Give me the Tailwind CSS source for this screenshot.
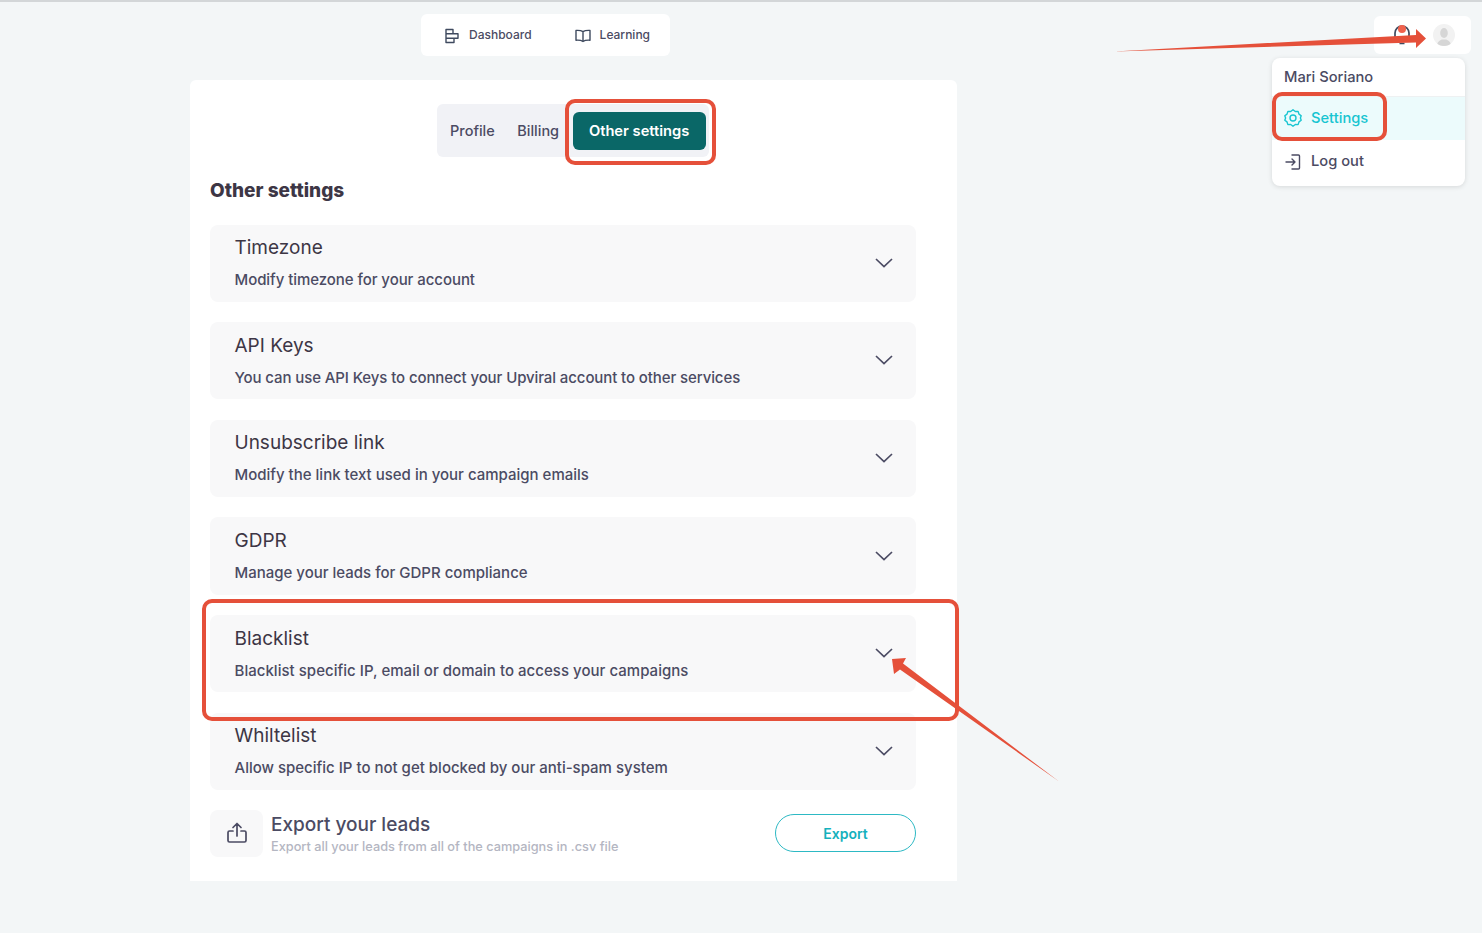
<!DOCTYPE html>
<html lang="en">
<head>
  <meta charset="UTF-8">
  <meta name="viewport" content="width=device-width, initial-scale=1.0">
  <title>Other settings</title>
  <script src="https://cdn.jsdelivr.net/npm/@tailwindcss/browser@4"></script>
</head>
<body class="relative h-[933px] overflow-hidden bg-[#f3f6f7] border-t-2 border-[#d3d6d8] font-['Inter',sans-serif] text-[#4b4b63]">
  <!-- Top nav -->
  <div class="flex justify-start pl-[421px] pt-3">
    <nav class="flex h-[42px] w-[249px] items-center rounded-md bg-white pl-[23px] text-[12px] font-medium">
      <a class="flex items-center gap-[9px]">
        <svg class="mt-px h-[16px] w-[16px]" viewBox="0 0 16 16" fill="none" stroke="#3f4a5f" stroke-width="1.4" stroke-linejoin="round"><path d="M2 1.5h7v4.3H2zM2 5.8h12v4.4H2zM2 10.2h8v4.3H2z"/></svg>
        <span>Dashboard</span>
      </a>
      <a class="ml-[43px] flex items-center gap-[9px]">
        <svg class="mt-px h-[16px] w-[16px]" viewBox="0 0 16 16" fill="none" stroke="#3f4a5f" stroke-width="1.4" stroke-linejoin="round"><path d="M8 3.6C6.5 2.6 4 2.2 1 2.4v9.8c3-.2 5.500.2 7 1.300 1.500-1.100 4-1.500 7-1.300V2.400C12 2.200 9.500 2.600 8 3.600zM8 3.600v9.900"/></svg>
        <span>Learning</span>
      </a>
    </nav>
  </div>

  <!-- Settings card -->
  <main class="ml-[190px] mt-6 h-[801px] w-[767px] rounded-t-md bg-white pl-5 pr-[41px] pt-6">
    <div class="ml-[227px] flex h-[53px] w-[272px] items-center rounded-md bg-[#f1f2f6] pl-[13px] pt-px text-[14.500px] font-medium">
      <span>Profile</span>
      <span class="ml-[22.500px]">Billing</span>
      <span class="ml-[13.500px] flex h-[38px] w-[133px] items-center justify-center rounded-md bg-[#0a6767] text-[14.700px] font-semibold text-white">Other settings</span>
    </div>
    <h2 class="mt-[22px] text-[19px] font-extrabold leading-[24px] text-[#3d3645]">Other settings</h2>

    <div class="mt-[21.500px] flex flex-col gap-[20.350px]">
      <section class="flex h-[77.300px] items-center justify-between rounded-lg bg-[#f8f8f9] pl-[24.500px] pr-[23px] pt-px">
        <div><h3 class="text-[19px] leading-[24px] text-[#3d3645]">Timezone</h3><p class="mt-[9px] text-[15px] font-medium leading-[22px] tracking-[-0.06px]">Modify timezone for your account</p></div>
        <svg class="h-[12px] w-[18px]" viewBox="0 0 18 12" fill="none" stroke="#4b4b63" stroke-width="1.700"><path d="M1 1l8 7.500L17 1"/></svg>
      </section>
      <section class="flex h-[77.300px] items-center justify-between rounded-lg bg-[#f8f8f9] pl-[24.500px] pr-[23px] pt-px">
        <div><h3 class="text-[19px] leading-[24px] text-[#3d3645]">API Keys</h3><p class="mt-[9px] text-[15px] font-medium leading-[22px] tracking-[-0.1px]">You can use API Keys to connect your Upviral account to other services</p></div>
        <svg class="h-[12px] w-[18px]" viewBox="0 0 18 12" fill="none" stroke="#4b4b63" stroke-width="1.700"><path d="M1 1l8 7.500L17 1"/></svg>
      </section>
      <section class="flex h-[77.300px] items-center justify-between rounded-lg bg-[#f8f8f9] pl-[24.500px] pr-[23px] pt-px">
        <div><h3 class="text-[19px] leading-[24px] text-[#3d3645]">Unsubscribe link</h3><p class="mt-[9px] text-[15px] font-medium leading-[22px]">Modify the link text used in your campaign emails</p></div>
        <svg class="h-[12px] w-[18px]" viewBox="0 0 18 12" fill="none" stroke="#4b4b63" stroke-width="1.700"><path d="M1 1l8 7.500L17 1"/></svg>
      </section>
      <section class="flex h-[77.300px] items-center justify-between rounded-lg bg-[#f8f8f9] pl-[24.500px] pr-[23px] pt-px">
        <div><h3 class="text-[19px] leading-[24px] text-[#3d3645]">GDPR</h3><p class="mt-[9px] text-[15px] font-medium leading-[22px]">Manage your leads for GDPR compliance</p></div>
        <svg class="h-[12px] w-[18px]" viewBox="0 0 18 12" fill="none" stroke="#4b4b63" stroke-width="1.700"><path d="M1 1l8 7.500L17 1"/></svg>
      </section>
      <section class="flex h-[77.300px] items-center justify-between rounded-lg bg-[#f8f8f9] pl-[24.500px] pr-[23px] pt-px">
        <div><h3 class="text-[19px] leading-[24px] text-[#3d3645]">Blacklist</h3><p class="mt-[9px] text-[15px] font-medium leading-[22px] tracking-[0.03px]">Blacklist specific IP, email or domain to access your campaigns</p></div>
        <svg class="h-[12px] w-[18px]" viewBox="0 0 18 12" fill="none" stroke="#4b4b63" stroke-width="1.700"><path d="M1 1l8 7.500L17 1"/></svg>
      </section>
      <section class="flex h-[77.300px] items-center justify-between rounded-lg bg-[#f8f8f9] pl-[24.500px] pr-[23px] pt-px">
        <div><h3 class="text-[19px] leading-[24px] text-[#3d3645]">Whiltelist</h3><p class="mt-[9px] text-[15px] font-medium leading-[22px]">Allow specific IP to not get blocked by our anti-spam system</p></div>
        <svg class="h-[12px] w-[18px]" viewBox="0 0 18 12" fill="none" stroke="#4b4b63" stroke-width="1.700"><path d="M1 1l8 7.500L17 1"/></svg>
      </section>
    </div>

    <div class="mt-[19.500px] flex items-center justify-between">
      <div class="flex items-center gap-2">
        <div class="flex h-[47px] w-[53px] items-center justify-center rounded-lg bg-[#f8f8f9]">
          <svg class="h-[22px] w-[20px]" viewBox="0 0 20 22" fill="none" stroke="#4b4b63" stroke-width="1.700" stroke-linecap="round" stroke-linejoin="round"><path d="M10 14V2M6 5.500 10 1.500l4 4M6 9H2.500a1.500 1.500 0 0 0-1.500 1.500v8A1.500 1.500 0 0 0 2.500 20h15a1.500 1.500 0 0 0 1.500-1.500v-8A1.500 1.500 0 0 0 17.500 9H14"/></svg>
        </div>
        <div class="pt-[2px]"><h3 class="text-[19px] font-medium leading-[26px]">Export your leads</h3><p class="text-[12.750px] font-medium leading-[18px] text-[#b4b6c2]">Export all your leads from all of the campaigns in .csv file</p></div>
      </div>
      <button class="h-[38px] w-[141px] rounded-full border border-[#2db9c4] text-[14px] font-semibold text-[#14b1bd]">Export</button>
    </div>
  </main>

  <!-- User nav and dropdown -->
  <div class="absolute left-[1374px] top-[14px] flex h-[38px] w-[97px] items-center rounded-md bg-white pl-[19px]">
    <div class="relative h-[22px] w-[18px]">
      <svg class="h-[22px] w-[18px]" viewBox="0 0 18 22" fill="none" stroke="#3f4a5f" stroke-width="1.700"><path d="M2 16V9a7 7 0 0 1 14 0v7M6.500 19.500h5"/></svg>
      <span class="absolute left-[5px] top-[1px] h-[8px] w-[8px] rounded-full bg-[#f0624d]"></span>
    </div>
    <div class="ml-[22px] flex h-[22px] w-[22px] items-end justify-center overflow-hidden rounded-full bg-[#f2f2f2]">
      <svg class="h-[19px] w-[16px]" viewBox="0 0 16 19" fill="#d6d6d6"><ellipse cx="8" cy="6" rx="3.800" ry="5"/><path d="M1 19c0-4 3-6 5-6.500h4c2 .5 5 2.500 5 6.500z"/></svg>
    </div>
  </div>
  <div class="absolute left-[1272px] top-[56px] h-[128px] w-[193px] rounded-lg bg-white text-[14.700px] font-medium shadow-[0_1px_5px_rgba(0,0,0,0.12)]">
    <div class="flex h-[39px] items-center border-b border-[#eef1f2] pl-3">Mari Soriano</div>
    <div class="flex h-[43px] items-center gap-[9px] bg-[#ecfbfc] pb-[1px] pl-3 text-[#17c5d1]">
      <svg class="h-[18px] w-[18px]" viewBox="0 0 18 18" fill="none" stroke="#17c5d1" stroke-width="1.400" stroke-linejoin="round"><path d="M9 .8l2.300 1.700 2.800-.1.900 2.700 2.200 1.700L16.400 9l.8 2.200-2.200 1.700-.9 2.700-2.800-.1L9 17.200l-2.300-1.700-2.800.1-.9-2.700L.8 11.200 1.600 9 .8 6.800 3 5.100l.9-2.700 2.800.1z"/><circle cx="9" cy="9" r="3"/></svg>
      <span>Settings</span>
    </div>
    <div class="flex h-[43px] items-center gap-[9px] pl-3">
      <svg class="h-[18px] w-[18px]" viewBox="0 0 18 18" fill="none" stroke="#4b4b63" stroke-width="1.400" stroke-linecap="round" stroke-linejoin="round"><path d="M8 2h6.500a1 1 0 0 1 1 1v12a1 1 0 0 1-1 1H8M2 9h9M8 6l3 3-3 3"/></svg>
      <span>Log out</span>
    </div>
  </div>

  <!-- Red annotations -->
  <div class="absolute left-[565px] top-[97px] h-[66px] w-[151px] rounded-[10px] border-[4px] border-[#e5503a]"></div>
  <div class="absolute left-[1272px] top-[90px] h-[49px] w-[115px] rounded-[10px] border-[4px] border-[#e5503a]"></div>
  <div class="absolute left-[202px] top-[597px] h-[122px] w-[757px] rounded-[10px] border-[4px] border-[#e5503a]"></div>
  <svg class="absolute left-0 top-[-2px] h-[933px] w-[1482px]" viewBox="0 0 1482 933" fill="#e5503a">
    <path d="M1114 51.500 1416 35 1416 29 1426 38.500 1416 48 1416 42.500z"/>
    <path d="M1059 781.500 900 669.500 894 674 892 659 906 658 903 663.500z"/>
  </svg>
</body>
</html>
